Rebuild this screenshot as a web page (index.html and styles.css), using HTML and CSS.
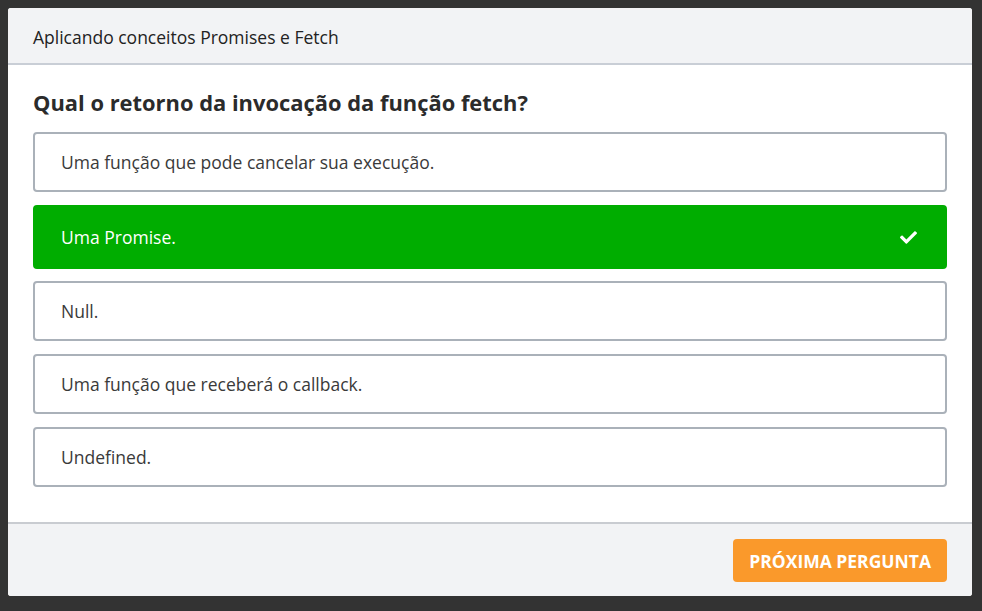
FILE: index.html
```html
<!DOCTYPE html>
<html lang="pt-BR">
<head>
<meta charset="utf-8">
<title>Aplicando conceitos Promises e Fetch</title>
<link rel="stylesheet" href="styles.css">
</head>
<body>
<div class="modal">
  <header class="modal-header">Aplicando conceitos Promises e Fetch</header>
  <main class="modal-body">
    <h2 class="question">Qual o retorno da invocação da função fetch?</h2>
    <ul class="options">
      <li class="option">Uma função que pode cancelar sua execução.</li>
      <li class="option option-correct">
        <span>Uma Promise.</span>
        <svg class="check" viewBox="0 0 512 512" width="17" height="17" aria-hidden="true"><path fill="currentColor" d="M173.898 439.404l-166.4-166.4c-9.997-9.997-9.997-26.206 0-36.204l36.203-36.204c9.997-9.998 26.207-9.998 36.204 0L192 312.69 432.095 72.596c9.997-9.997 26.207-9.997 36.204 0l36.203 36.204c9.997 9.997 9.997 26.206 0 36.204l-294.4 294.401c-9.998 9.997-26.207 9.997-36.204-.001z"/></svg>
      </li>
      <li class="option">Null.</li>
      <li class="option">Uma função que receberá o callback.</li>
      <li class="option">Undefined.</li>
    </ul>
  </main>
  <footer class="modal-footer">
    <button class="btn-next" type="button">PRÓXIMA PERGUNTA</button>
  </footer>
</div>
</body>
</html>
```
FILE: styles.css
```css
* { box-sizing: border-box; }
html, body { margin: 0; height: 100%; }
body {
  background: #333333;
  padding: 8px 10px 15px 8px;
  font-family: "Open Sans", "Noto Sans", sans-serif;
}
.modal {
  width: 964px;
  height: 588px;
  background: #ffffff;
  border-radius: 3px;
  overflow: hidden;
  display: flex;
  flex-direction: column;
}
.modal-header {
  height: 57px;
  flex: none;
  display: flex;
  align-items: center;
  padding: 2px 25px 0;
  background: #f2f3f5;
  border-bottom: 2px solid #c9ced6;
  color: #222;
  font-size: 17.5px;
}
.modal-body {
  flex: 1;
  padding: 24px 25px 33px;
}
.question {
  margin: 0 0 15px;
  font-size: 21.9px;
  line-height: 28px;
  font-weight: 700;
  color: #2b2b2b;
}
.options {
  list-style: none;
  margin: 0;
  padding: 0;
  display: flex;
  flex-direction: column;
  gap: 13px;
}
.option {
  height: 60px;
  flex: none;
  display: flex;
  align-items: center;
  justify-content: space-between;
  padding: 0 28px 0 26px;
  border: 2px solid #aab1b9;
  border-radius: 4px;
  color: #3a3a3a;
  font-size: 17.5px;
}
.option-correct {
  height: 64px;
  margin-bottom: -1px;
  background: #00ad00;
  border-color: #00ad00;
  color: #ffffff;
}
.check { display: block; }
.modal-footer {
  flex: none;
  display: flex;
  justify-content: flex-end;
  padding: 15px 25px 14px;
  background: #f2f3f5;
  border-top: 2px solid #c9ccd1;
}
.btn-next {
  height: 43px;
  padding: 0 16px;
  border: none;
  border-radius: 4px;
  background: #fa992b;
  color: #ffffff;
  font-family: "Open Sans", "Noto Sans", sans-serif;
  font-weight: 700;
  font-size: 17.5px;
}
```
